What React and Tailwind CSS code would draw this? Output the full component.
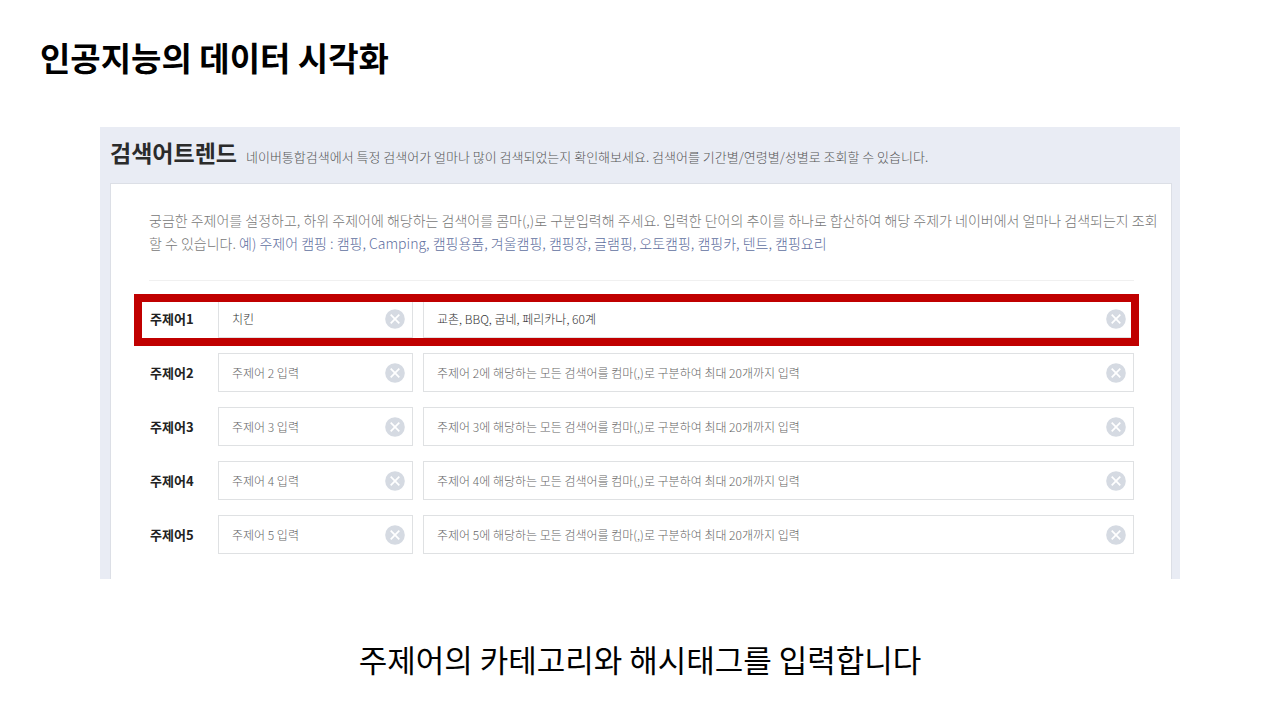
const topics = [
  { id: 1, name: '치킨', keywords: '교촌, BBQ, 굽네, 페리카나, 60계' },
  { id: 2, name: '', keywords: '' },
  { id: 3, name: '', keywords: '' },
  { id: 4, name: '', keywords: '' },
  { id: 5, name: '', keywords: '' },
];

function ClearIcon() {
  return (
    <svg viewBox="0 0 20 20" className="size-5" aria-hidden="true">
      <circle cx="10" cy="10" r="9.8" fill="#d5dae2" />
      <path d="M5.7 5.7 14.3 14.3M14.3 5.7 5.7 14.3" stroke="#fff" strokeWidth="1.7" fill="none" />
    </svg>
  );
}

function Field({ className, value, placeholder, label, id }) {
  return (
    <div className={`flex h-[39px] items-center border border-[#dfe1e3] bg-white pr-[7px] pl-[13px] ${className}`}>
      <input
        id={id}
        type="text"
        aria-label={label}
        defaultValue={value}
        placeholder={placeholder}
        className="min-w-0 flex-1 bg-transparent text-xs font-light text-[#333] outline-none placeholder:text-[#666]"
      />
      <button type="button" aria-label={`${label} 지우기`} className="shrink-0">
        <ClearIcon />
      </button>
    </div>
  );
}

function TopicRow({ topic }) {
  const { id, name, keywords } = topic;
  return (
    <div className="relative flex items-center">
      <label htmlFor={`topic-${id}`} className="w-[68px] shrink-0 text-[13px] font-bold text-[#222]">
        주제어{id}
      </label>
      <Field
        id={`topic-${id}`}
        className="mr-[10px] w-[195px] shrink-0"
        value={name}
        placeholder={`주제어 ${id} 입력`}
        label={`주제어${id}`}
      />
      <Field
        id={`keywords-${id}`}
        className="min-w-0 flex-1"
        value={keywords}
        placeholder={`주제어 ${id}에 해당하는 모든 검색어를 컴마(,)로 구분하여 최대 20개까지 입력`}
        label={`주제어${id} 검색어`}
      />
      {id === 1 && (
        <div className="pointer-events-none absolute -top-[5px] -right-[5px] -bottom-2 -left-4 border-8 border-[#c00000]" />
      )}
    </div>
  );
}

export default function App() {
  return (
    <main className="bg-white pt-[33px] font-['Noto_Sans_CJK_KR','Noto_Sans',sans-serif]">
      <h1 className="px-10 text-[33px] leading-[48px] font-bold text-black">인공지능의 데이터 시각화</h1>

      <section className="mx-[100px] mt-[46px] bg-[#e9ecf4] pr-2 pl-[10px]">
        <header className="flex h-14 items-baseline gap-[9px] pt-[7px] whitespace-nowrap">
          <h2 className="text-[23px] leading-9 font-bold text-[#2b2b2b]">검색어트렌드</h2>
          <p className="text-[13px] font-light text-[#555]">
            네이버통합검색에서 특정 검색어가 얼마나 많이 검색되었는지 확인해보세요. 검색어를 기간별/연령별/성별로 조회할 수 있습니다.
          </p>
        </header>

        <div className="border border-b-0 border-[#dcdfe6] bg-white pr-[37px] pb-[25px] pl-[38px]">
          <p className="-mr-8 pt-[25px] text-sm leading-[23px] font-light text-[#777]">
            궁금한 주제어를 설정하고, 하위 주제어에 해당하는 검색어를 콤마(,)로 구분입력해 주세요. 입력한 단어의 추이를 하나로 합산하여 해당 주제가 네이버에서 얼마나 검색되는지 조회
            <br />
            할 수 있습니다.{' '}
            <span className="text-[#5f6fa0]">
              예) 주제어 캠핑 : 캠핑, Camping, 캠핑용품, 겨울캠핑, 캠핑장, 글램핑, 오토캠핑, 캠핑카, 텐트, 캠핑요리
            </span>
          </p>
          <hr className="mt-[25px] mb-[18px] border-[#f0f0f0]" />
          <form className="flex flex-col gap-[15px] pl-px">
            {topics.map((topic) => (
              <TopicRow key={topic.id} topic={topic} />
            ))}
          </form>
        </div>
      </section>

      <p className="pt-14 pb-8 text-center text-[31px] leading-[48px] text-black">
        주제어의 카테고리와 해시태그를 입력합니다
      </p>
    </main>
  );
}
